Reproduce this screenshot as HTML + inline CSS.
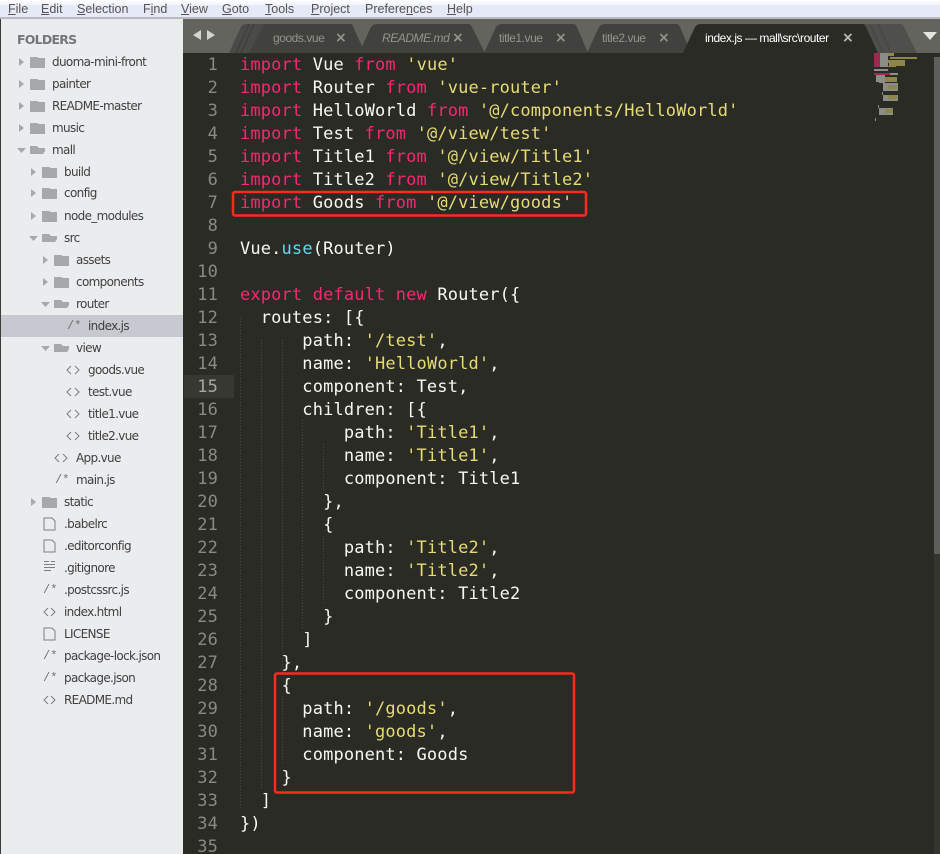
<!DOCTYPE html>
<html><head><meta charset="utf-8"><style>
html,body{margin:0;padding:0;background:#2a2b25}
#p{position:relative;width:940px;height:854px;overflow:hidden;background:#2a2b25}
#p div{position:absolute}
.m{top:1px;font:12.5px/17px "Liberation Sans",sans-serif;color:#555;white-space:nowrap}
.m u{text-decoration:underline}
.r{font:12px/16px "DejaVu Sans",sans-serif;letter-spacing:-.66px;color:#404040;white-space:nowrap}
.n{left:184px;width:34px;text-align:right;font:17px/23px "DejaVu Sans Mono",monospace;color:#8a8a82;letter-spacing:.15px;margin-top:1px}
.c{left:240px;font:17px/23px "DejaVu Sans Mono",monospace;letter-spacing:.15px;color:#f8f8f2;white-space:pre;margin-top:1px}
.k{color:#f92672}.s{color:#e6db74}.b{color:#66d9ef}
.t{font:12px/16px "Liberation Sans",sans-serif;letter-spacing:-.45px;color:#94948d;white-space:nowrap;top:30px}
.x{top:29px;font:bold 14px/18px "DejaVu Sans",sans-serif;color:#94948d}
.g{font:12px/16px "Liberation Mono",monospace;color:#707070;white-space:nowrap}
svg{position:absolute;left:0;top:0}
</style></head><body><div id="p">
<div style="left:0;top:0;width:940px;height:5px;background:linear-gradient(#fff,#f1f3fb)"></div>
<div style="left:0;top:5px;width:940px;height:12px;background:#e6e9f6"></div>
<div style="left:0;top:17px;width:940px;height:2px;background:#b9bac1"></div>
<div class="m" style="left:8px"><u>F</u>ile</div><div class="m" style="left:41px"><u>E</u>dit</div><div class="m" style="left:77px"><u>S</u>election</div><div class="m" style="left:143px">F<u>i</u>nd</div><div class="m" style="left:181px"><u>V</u>iew</div><div class="m" style="left:222px"><u>G</u>oto</div><div class="m" style="left:265px"><u>T</u>ools</div><div class="m" style="left:311px"><u>P</u>roject</div><div class="m" style="left:365px">Prefere<u>n</u>ces</div><div class="m" style="left:447px"><u>H</u>elp</div>

<div style="left:0;top:19px;width:183px;height:835px;background:#ebecee"></div>
<div style="left:0;top:19px;width:1px;height:835px;background:#3c3c38"></div>
<div style="left:1px;top:315px;width:182px;height:22px;background:#c6c9d0"></div>
<div style="left:17px;top:32px;font:bold 12.5px/16px 'DejaVu Sans',sans-serif;letter-spacing:-.75px;color:#75767a">FOLDERS</div>

<div style="left:183px;top:19px;width:757px;height:34px;background:#64645f"></div>
<svg width="940" height="854">
<path d="M229 53L241 27Q243 24 247 24H352L365 53Z" fill="#41423d"/>
<path d="M229 53L241 27Q243 24 247 24H264L249 53Z" fill="#4a4b46"/>
<path d="M236 53L249 24M241 53L254 24" stroke="#3f403b" stroke-width="1.500"/>
<path d="M359 53L371 27Q373 24 377 24H468Q471 24 472 27L485 53Z" fill="#41423d"/>
<path d="M484 53L496 27Q498 24 502 24H573Q576 24 577 27L588 53Z" fill="#41423d"/>
<path d="M587 53L599 27Q601 24 605 24H676Q679 24 680 27L691 53Z" fill="#41423d"/>
<path d="M860 24H900Q903 24 904 27L917 53H870Z" fill="#4f504b"/>
<path d="M883 53L870 24M891 53L878 24" stroke="#474843" stroke-width="1.500"/>
<path d="M683 53L695 27Q697 24 701 24H862Q865 24 866 27L878 53Z" fill="#2a2b25"/>
<path d="M193 35L201 30V40ZM207 30L215 35L207 40Z" fill="#d4d4d0"/>
<path d="M923 32H937L930 40Z" fill="#e4e4e0"/>
<g fill="#a7a8aa">
<path d="M19 58L24 62L19 66ZM19 80L24 84L19 88ZM19 102L24 106L19 110ZM19 124L24 128L19 132ZM31 168L36 172L31 176ZM31 189L36 193L31 197ZM31 212L36 216L31 220ZM43 256L48 260L43 264ZM43 278L48 282L43 286ZM31 498L36 502L31 506Z"/>
<path d="M17 148H26L21.500 153ZM29 236H38L33.500 241ZM41 302H50L45.500 307ZM41 346H50L45.500 351Z"/>
<path d="M30 57H37L39 58H45V68H30ZM30 79H37L39 80H45V90H30ZM30 101H37L39 102H45V112H30ZM30 123H37L39 124H45V134H30ZM42 167H49L51 168H57V178H42ZM42 188H49L51 189H57V199H42ZM42 211H49L51 212H57V222H42ZM54 255H61L63 256H69V266H54ZM54 277H61L63 278H69V288H54ZM42 497H49L51 498H57V508H42Z"/>
<path d="M30 154V146H37L39 148H45V151H34L30 154H43L45 151H34L30 154ZM42 242V234H49L51 236H57V239H46L42 242H55L57 239H46L42 242ZM54 308V300H61L63 302H69V305H58L54 308H67L69 305H58L54 308ZM54 352V344H61L63 346H69V349H58L54 352H67L69 349H58L54 352Z"/>
</g>
<g fill="none" stroke="#7d7e80" stroke-width="1">
<path d="M44 518H52L55 521V530H44ZM44 540H52L55 543V552H44ZM44 628H52L55 631V640H44Z"/>
<path d="M44 561.500H49M44 564.500H55M44 567.500H55M44 570.500H51M51 561.500H55"/>
<path d="M48 608L44 612L48 616M51 608L55 612L51 616M48 696L44 700L48 704M51 696L55 700L51 704M71 366L67 370L71 374M75 366L79 370L75 374M71 388L67 392L71 396M75 388L79 392L75 396M71 410L67 414L71 418M75 410L79 414L75 418M71 432L67 436L71 440M75 432L79 436L75 440M59 454L55 458L59 462M63 454L67 458L63 462"/>
</g>
<rect x="184" y="375" width="50" height="23" fill="#373832"/>
<g stroke="#4a4b44" stroke-dasharray="1 2" stroke-width="1">
<path d="M240.500 318V810M261.500 340V788M282.500 340V672M302.500 420V628M323.500 444V490M323.500 536V605M282.500 696V765"/>
</g>
<g fill="#a02850"><rect x="874" y="53" width="6" height="14"/><rect x="874" y="73" width="16" height="2"/></g>
<g fill="#8d8d88"><rect x="880" y="53" width="8" height="14"/><rect x="874" y="69" width="14" height="2"/><rect x="890" y="73" width="8" height="2"/><rect x="876" y="75" width="9" height="7"/><rect x="879" y="77" width="6" height="6"/><rect x="883" y="83" width="15" height="8"/><rect x="883" y="95" width="15" height="6"/><rect x="879" y="108" width="14" height="7"/><rect x="882" y="92" width="1" height="3"/><rect x="878" y="105" width="1" height="3"/><rect x="875" y="118" width="1" height="3"/></g>
<g fill="#8f8748"><rect x="888" y="53" width="6" height="3"/><rect x="890" y="57" width="27" height="2"/><rect x="888" y="60" width="17" height="3"/><rect x="889" y="63" width="16" height="3"/><rect x="888" y="66" width="8" height="1"/><rect x="885" y="77" width="12" height="5"/><rect x="888" y="85" width="9" height="4"/><rect x="888" y="95" width="9" height="4"/><rect x="885" y="109" width="8" height="4"/></g>
<rect x="934" y="57" width="6" height="497" fill="#5e5f5a"/>
<rect x="934" y="554" width="6" height="300" fill="#34352f"/>
<g fill="none" stroke="#ff2a1c" stroke-width="2.500">
<rect x="233" y="192" width="353" height="23.500" rx="2"/>
<rect x="275" y="673.500" width="299" height="119" rx="2"/>
</g>
</svg>

<div class="r" style="left:52px;top:54px">duoma-mini-front</div>
<div class="r" style="left:52px;top:76px">painter</div>
<div class="r" style="left:52px;top:98px">README-master</div>
<div class="r" style="left:52px;top:120px">music</div>
<div class="r" style="left:52px;top:142px">mall</div>
<div class="r" style="left:64px;top:164px">build</div>
<div class="r" style="left:64px;top:185px">config</div>
<div class="r" style="left:64px;top:208px">node_modules</div>
<div class="r" style="left:64px;top:230px">src</div>
<div class="r" style="left:76px;top:252px">assets</div>
<div class="r" style="left:76px;top:274px">components</div>
<div class="r" style="left:76px;top:296px">router</div>
<div class="r" style="left:88px;top:318px">index.js</div>
<div class="r" style="left:76px;top:340px">view</div>
<div class="r" style="left:88px;top:362px">goods.vue</div>
<div class="r" style="left:88px;top:384px">test.vue</div>
<div class="r" style="left:88px;top:406px">title1.vue</div>
<div class="r" style="left:88px;top:428px">title2.vue</div>
<div class="r" style="left:76px;top:450px">App.vue</div>
<div class="r" style="left:76px;top:472px">main.js</div>
<div class="r" style="left:64px;top:494px">static</div>
<div class="r" style="left:64px;top:516px">.babelrc</div>
<div class="r" style="left:64px;top:538px">.editorconfig</div>
<div class="r" style="left:64px;top:560px">.gitignore</div>
<div class="r" style="left:64px;top:582px">.postcssrc.js</div>
<div class="r" style="left:64px;top:604px">index.html</div>
<div class="r" style="left:64px;top:626px">LICENSE</div>
<div class="r" style="left:64px;top:648px">package-lock.json</div>
<div class="r" style="left:64px;top:670px">package.json</div>
<div class="r" style="left:64px;top:692px">README.md</div>
<div class="g" style="left:67px;top:318px">/*</div><div class="g" style="left:55px;top:472px">/*</div><div class="g" style="left:43px;top:582px">/*</div><div class="g" style="left:43px;top:648px">/*</div><div class="g" style="left:43px;top:670px">/*</div>

<div class="t" style="left:273px">goods.vue</div><div class="x" style="left:335px">×</div>
<div class="t" style="left:382px;font-style:italic">README.md</div><div class="x" style="left:452px">×</div>
<div class="t" style="left:499px">title1.vue</div><div class="x" style="left:555px">×</div>
<div class="t" style="left:602px">title2.vue</div><div class="x" style="left:658px">×</div>
<div class="t" style="left:705px;color:#fff">index.js — mall\src\router</div><div class="x" style="left:842px;color:#c0c0ba">×</div>

<div class="n" style="top:53px">1</div><div class="c" style="top:53px"><span class="k">import</span> Vue <span class="k">from</span> <span class="s">'vue'</span></div>
<div class="n" style="top:76px">2</div><div class="c" style="top:76px"><span class="k">import</span> Router <span class="k">from</span> <span class="s">'vue-router'</span></div>
<div class="n" style="top:99px">3</div><div class="c" style="top:99px"><span class="k">import</span> HelloWorld <span class="k">from</span> <span class="s">'@/components/HelloWorld'</span></div>
<div class="n" style="top:122px">4</div><div class="c" style="top:122px"><span class="k">import</span> Test <span class="k">from</span> <span class="s">'@/view/test'</span></div>
<div class="n" style="top:145px">5</div><div class="c" style="top:145px"><span class="k">import</span> Title1 <span class="k">from</span> <span class="s">'@/view/Title1'</span></div>
<div class="n" style="top:168px">6</div><div class="c" style="top:168px"><span class="k">import</span> Title2 <span class="k">from</span> <span class="s">'@/view/Title2'</span></div>
<div class="n" style="top:191px">7</div><div class="c" style="top:191px"><span class="k">import</span> Goods <span class="k">from</span> <span class="s">'@/view/goods'</span></div>
<div class="n" style="top:214px">8</div>
<div class="n" style="top:237px">9</div><div class="c" style="top:237px">Vue.<span class="b">use</span>(Router)</div>
<div class="n" style="top:260px">10</div>
<div class="n" style="top:283px">11</div><div class="c" style="top:283px"><span class="k">export default new</span> Router({</div>
<div class="n" style="top:306px">12</div><div class="c" style="top:306px">  routes: [{</div>
<div class="n" style="top:329px">13</div><div class="c" style="top:329px">      path: <span class="s">'/test'</span>,</div>
<div class="n" style="top:352px">14</div><div class="c" style="top:352px">      name: <span class="s">'HelloWorld'</span>,</div>
<div class="n" style="top:375px;color:#a8a8a0">15</div><div class="c" style="top:375px">      component: Test,</div>
<div class="n" style="top:398px">16</div><div class="c" style="top:398px">      children: [{</div>
<div class="n" style="top:421px">17</div><div class="c" style="top:421px">          path: <span class="s">'Title1'</span>,</div>
<div class="n" style="top:444px">18</div><div class="c" style="top:444px">          name: <span class="s">'Title1'</span>,</div>
<div class="n" style="top:467px">19</div><div class="c" style="top:467px">          component: Title1</div>
<div class="n" style="top:490px">20</div><div class="c" style="top:490px">        },</div>
<div class="n" style="top:513px">21</div><div class="c" style="top:513px">        {</div>
<div class="n" style="top:536px">22</div><div class="c" style="top:536px">          path: <span class="s">'Title2'</span>,</div>
<div class="n" style="top:559px">23</div><div class="c" style="top:559px">          name: <span class="s">'Title2'</span>,</div>
<div class="n" style="top:582px">24</div><div class="c" style="top:582px">          component: Title2</div>
<div class="n" style="top:605px">25</div><div class="c" style="top:605px">        }</div>
<div class="n" style="top:628px">26</div><div class="c" style="top:628px">      ]</div>
<div class="n" style="top:651px">27</div><div class="c" style="top:651px">    },</div>
<div class="n" style="top:674px">28</div><div class="c" style="top:674px">    {</div>
<div class="n" style="top:697px">29</div><div class="c" style="top:697px">      path: <span class="s">'/goods'</span>,</div>
<div class="n" style="top:720px">30</div><div class="c" style="top:720px">      name: <span class="s">'goods'</span>,</div>
<div class="n" style="top:743px">31</div><div class="c" style="top:743px">      component: Goods</div>
<div class="n" style="top:766px">32</div><div class="c" style="top:766px">    }</div>
<div class="n" style="top:789px">33</div><div class="c" style="top:789px">  ]</div>
<div class="n" style="top:812px">34</div><div class="c" style="top:812px">})</div>
<div class="n" style="top:835px">35</div>
</div></body></html>
